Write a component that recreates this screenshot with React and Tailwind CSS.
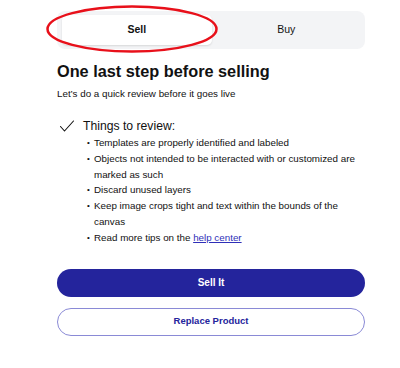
export default function App() {
  const items = [
    "Templates are properly identified and labeled",
    "Objects not intended to be interacted with or customized are marked as such",
    "Discard unused layers",
    "Keep image crops tight and text within the bounds of the canvas",
  ];
  return (
    <div className="relative w-[400px] h-[368px] bg-white font-['Liberation_Sans',Arial,sans-serif] text-[#111]">
      <div className="ml-[57px] w-[308px] pt-[11px]">
        {/* Tabs */}
        <div className="flex h-[38px] rounded-[8px] bg-[#f3f4f6] p-[4px] pl-[5px]">
          <div className="flex-1 flex items-center justify-center rounded-[5px] bg-white shadow-[0_1px_2px_rgba(0,0,0,0.12)] text-[10.5px] font-bold">
            Sell
          </div>
          <div className="flex-1 flex items-center justify-center text-[10.5px]">
            Buy
          </div>
        </div>

        <h1 className="mt-[12px] text-[16.3px] font-bold leading-[20px] text-[#111]">
          One last step before selling
        </h1>
        <p className="mt-[6px] text-[9.8px] leading-[14px]">
          Let’s do a quick review before it goes live
        </p>

        <div className="mt-[17px] flex items-center">
          <svg width="16" height="12" viewBox="0 0 16 12" className="ml-[2px] mr-[8px]" fill="none">
            <path d="M1.5 6.5 L5.5 11 L14.5 1" stroke="#111" strokeWidth="1.1" strokeLinecap="round" strokeLinejoin="round" />
          </svg>
          <span className="text-[12.2px] leading-[16px]">Things to review:</span>
        </div>

        <ul className="mt-[1px] pl-[30px] pr-0 text-[9.8px] leading-[15.8px]">
          {items.map((t) => (
            <li key={t} className="flex">
              <span className="w-[7px] shrink-0 text-[8px]">•</span>
              <span>{t}</span>
            </li>
          ))}
          <li className="flex">
            <span className="w-[7px] shrink-0 text-[8px]">•</span>
            <span>
              Read more tips on the{" "}
              <span className="text-[#2f2fb8] underline">help center</span>
            </span>
          </li>
        </ul>

        <button className="mt-[23px] w-full h-[28px] rounded-full bg-[#24249c] text-white text-[10px] font-bold flex items-center justify-center">
          Sell It
        </button>
        <button className="mt-[11px] w-full h-[28px] rounded-full border border-[#8a8ad6] bg-white text-[#24249c] text-[9.5px] font-bold flex items-center justify-center">
          Replace Product
        </button>
      </div>

      {/* red annotation ellipse */}
      <svg className="absolute left-0 top-0 pointer-events-none" width="400" height="368">
        <ellipse cx="132" cy="29" rx="84.5" ry="22.5" fill="none" stroke="#e8101a" strokeWidth="2.5" />
      </svg>
    </div>
  );
}
